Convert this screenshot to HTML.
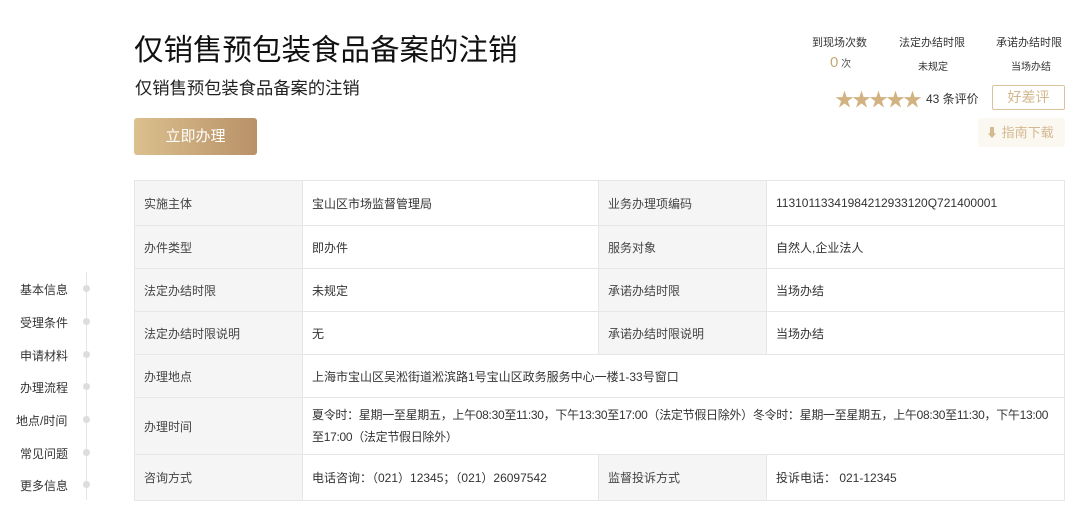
<!DOCTYPE html>
<html><head><meta charset="utf-8"><style>
*{margin:0;padding:0;box-sizing:border-box}
body{width:1080px;height:524px;background:#fff;font-family:"Liberation Sans","Noto Sans CJK SC",sans-serif;color:#333;position:relative;overflow:hidden}
.a{position:absolute;white-space:nowrap}
table{position:absolute;left:134px;top:180px;width:931px;border-collapse:collapse;font-size:12px}
td{border:1px solid #e6e6e6;padding:0 9px;vertical-align:middle;color:#333}
td.h{background:#f5f5f5;color:#444}
.nav{font-size:12px;color:#333}
.dot{position:absolute;left:83px;width:7px;height:7px;border-radius:50%;background:#ddd}
</style></head><body>
<div class="a" style="left:134px;top:27px;font-size:29.5px;color:#111">仅销售预包装食品备案的注销</div>
<div class="a" style="left:135px;top:74px;font-size:17.3px;color:#222">仅销售预包装食品备案的注销</div>
<div class="a" style="left:134px;top:118px;width:123px;height:37px;border-radius:3px;background:linear-gradient(90deg,#dcc08e,#b89168);color:#fff;font-size:15px;text-align:center;line-height:37px">立即办理</div>

<div class="a" style="left:812px;top:34px;font-size:11px;color:#333">到现场次数</div>
<div class="a" style="left:899px;top:34px;font-size:11px;color:#333">法定办结时限</div>
<div class="a" style="left:996px;top:34px;font-size:11px;color:#333">承诺办结时限</div>
<div class="a" style="left:830px;top:54px;font-size:15px;color:#c8a878">0<span style="font-size:10px;color:#555"> 次</span></div>
<div class="a" style="left:918px;top:58px;font-size:10px;color:#333">未规定</div>
<div class="a" style="left:1011px;top:58px;font-size:10px;color:#333">当场办结</div>
<div class="a" style="left:835px;top:85px;font-size:19px;color:#d3b281;letter-spacing:-2px">★★★★★</div>
<div class="a" style="left:926px;top:90px;font-size:12px;color:#333">43 条评价</div>
<div class="a" style="left:992px;top:85px;width:73px;height:25px;border:1px solid #d8c39e;border-radius:2px;color:#d0b88c;font-size:14px;text-align:center;line-height:23px">好差评</div>
<div class="a" style="left:978px;top:118px;width:87px;height:29px;background:#fbf7f1;border-radius:3px;color:#d3b98f;font-size:13px;line-height:29px;padding-left:8px"><span style="font-size:12px">⬇</span> 指南下载</div>

<div class="a" style="left:86px;top:272px;width:1px;height:228px;background:#e6e6e6"></div>
<div class="a nav" style="left:20px;top:281px">基本信息</div><div class="dot" style="top:285px"></div>
<div class="a nav" style="left:20px;top:314px">受理条件</div><div class="dot" style="top:318px"></div>
<div class="a nav" style="left:20px;top:347px">申请材料</div><div class="dot" style="top:351px"></div>
<div class="a nav" style="left:20px;top:379px">办理流程</div><div class="dot" style="top:383px"></div>
<div class="a nav" style="left:16px;top:412px">地点/时间</div><div class="dot" style="top:416px"></div>
<div class="a nav" style="left:20px;top:445px">常见问题</div><div class="dot" style="top:449px"></div>
<div class="a nav" style="left:20px;top:477px">更多信息</div><div class="dot" style="top:481px"></div>

<table>
<colgroup><col style="width:168px"><col style="width:296px"><col style="width:168px"><col></colgroup>
<tr style="height:45px"><td class="h">实施主体</td><td>宝山区市场监督管理局</td><td class="h">业务办理项编码</td><td>11310113341984212933120Q721400001</td></tr>
<tr style="height:43px"><td class="h">办件类型</td><td>即办件</td><td class="h">服务对象</td><td>自然人,企业法人</td></tr>
<tr style="height:43px"><td class="h">法定办结时限</td><td>未规定</td><td class="h">承诺办结时限</td><td>当场办结</td></tr>
<tr style="height:43px"><td class="h">法定办结时限说明</td><td>无</td><td class="h">承诺办结时限说明</td><td>当场办结</td></tr>
<tr style="height:43px"><td class="h">办理地点</td><td colspan="3">上海市宝山区吴淞街道淞滨路1号宝山区政务服务中心一楼1-33号窗口</td></tr>
<tr style="height:57px"><td class="h">办理时间</td><td colspan="3" style="line-height:22px;letter-spacing:-0.3px">夏令时：星期一至星期五，上午08:30至11:30，下午13:30至17:00（法定节假日除外）冬令时：星期一至星期五，上午08:30至11:30，下午13:00至17:00（法定节假日除外）</td></tr>
<tr style="height:46px"><td class="h">咨询方式</td><td>电话咨询：（021）12345；（021）26097542</td><td class="h">监督投诉方式</td><td>投诉电话： 021-12345</td></tr>
</table>
</body></html>
